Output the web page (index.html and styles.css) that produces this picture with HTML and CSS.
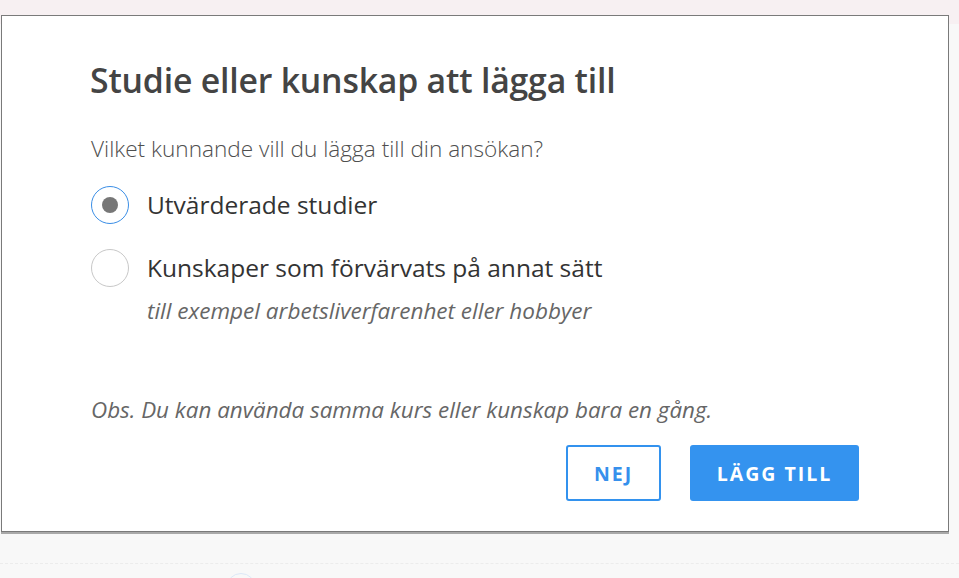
FILE: index.html
```html
<!DOCTYPE html>
<html lang="sv">
<head>
<meta charset="utf-8">
<title>Studie eller kunskap att lägga till</title>
<link rel="stylesheet" href="styles.css">
</head>
<body>
<div class="page">
  <div class="topband"></div>
  <div class="content">
    <div class="dashed"></div>
    <div class="arc"></div>
  </div>
</div>
<div class="dialog" role="dialog">
  <h1 class="title">Studie eller kunskap att lägga till</h1>
  <p class="question">Vilket kunnande vill du lägga till din ansökan?</p>
  <div class="options">
    <label class="option">
      <span class="radio checked"><span class="dot"></span></span>
      <span class="option-text">
        <span class="label">Utvärderade studier</span>
      </span>
    </label>
    <label class="option">
      <span class="radio"></span>
      <span class="option-text">
        <span class="label">Kunskaper som förvärvats på annat sätt</span>
        <span class="hint">till exempel arbetsliverfarenhet eller hobbyer</span>
      </span>
    </label>
  </div>
  <p class="note">Obs. Du kan använda samma kurs eller kunskap bara en gång.</p>
  <div class="actions">
    <button class="btn btn-secondary">NEJ</button>
    <button class="btn btn-primary">LÄGG TILL</button>
  </div>
</div>
</body>
</html>
```
FILE: styles.css
```css
html, body {
  margin: 0;
  padding: 0;
}
body {
  background: #f8f8f8;
  font-family: "Open Sans", "Noto Sans", sans-serif;
  color: #333;
  height: 578px;
  overflow: hidden;
}
.page {
  display: flex;
  flex-direction: column;
  height: 578px;
}
.topband {
  height: 24px;
  background: #f7f0f2;
}
.content {
  flex: 1;
  position: relative;
}
.dashed {
  margin-top: 539px;
  border-top: 1px dashed #ececec;
}
.arc {
  position: absolute;
  left: 226px;
  top: 549px;
  width: 28px;
  height: 28px;
  border-radius: 50%;
  border: 1px solid #dce8f7;
}
.dialog {
  position: absolute;
  left: 1px;
  top: 15px;
  width: 946px;
  height: 515px;
  background: #fff;
  border: 1px solid #7a7a7a;
  box-shadow: 0 2px 0 #a9a9a9;
  box-sizing: content-box;
  padding: 0;
}
.title {
  margin: 44px 0 0 88px;
  font-size: 33.8px;
  font-weight: 600;
  color: #444;
  line-height: 40px;
  letter-spacing: -0.2px;
  white-space: nowrap;
}
.question {
  margin: 34px 0 0 89px;
  font-size: 22.6px;
  font-weight: 300;
  color: #4f4f4f;
  line-height: 30px;
  white-space: nowrap;
}
.options {
  margin: 22px 0 0 89px;
  display: flex;
  flex-direction: column;
  gap: 25px;
}
.option {
  display: flex;
  align-items: flex-start;
  gap: 18px;
}
.radio {
  width: 36px;
  height: 36px;
  border-radius: 50%;
  border: 1px solid #c8c8c8;
  display: flex;
  align-items: center;
  justify-content: center;
  flex: none;
}
.radio.checked {
  border-color: #3a8ee6;
}
.dot {
  width: 16px;
  height: 16px;
  border-radius: 50%;
  background: #777;
}
.option-text {
  display: flex;
  flex-direction: column;
}
.label {
  font-size: 24.5px;
  line-height: 38px;
  color: #333;
  white-space: nowrap;
}
.hint {
  font-size: 22.5px;
  font-style: italic;
  color: #666;
  line-height: 28px;
  margin-top: 10px;
  white-space: nowrap;
}
.note {
  margin: 71px 0 0 89px;
  font-size: 22.4px;
  font-style: italic;
  color: #666;
  line-height: 28px;
  white-space: nowrap;
}
.actions {
  margin: 21px 89px 0 0;
  display: flex;
  justify-content: flex-end;
  gap: 29px;
}
.btn {
  font-family: "Open Sans", sans-serif;
  font-weight: 700;
  font-size: 19.5px;
  letter-spacing: 2px;
  height: 56px;
  border-radius: 3px;
  cursor: pointer;
}
.btn-secondary {
  width: 95px;
  background: #fff;
  color: #3690ec;
  border: 2px solid #3392ee;
}
.btn-primary {
  width: 169px;
  background: #3493ef;
  color: #fff;
  border: none;
}
```
